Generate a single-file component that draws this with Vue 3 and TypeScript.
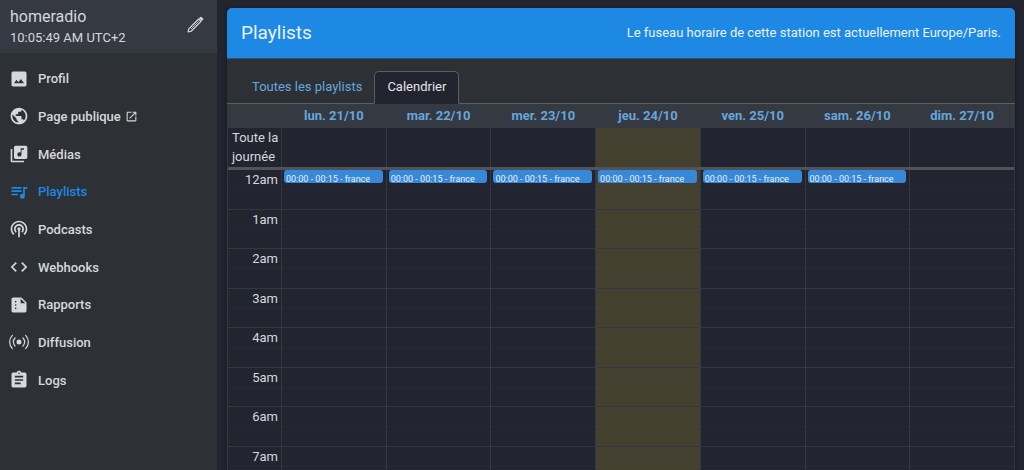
<script setup lang="ts">
interface NavItem {
  label: string
  path: string
  box: string
  active?: boolean
  external?: boolean
}

interface CalendarEvent {
  label: string
}

interface Day {
  label: string
  today: boolean
  event: CalendarEvent | null
}

const nav: NavItem[] = [
  {
    label: 'Profil',
    box: '0 0 24 24',
    path: 'M5 21q-.825 0-1.412-.587T3 19V5q0-.825.588-1.412T5 3h14q.825 0 1.413.588T21 5v14q0 .825-.587 1.413T19 21H5zm1-4h12l-3.75-5-3 4L9 13l-3 4z',
  },
  {
    label: 'Page publique',
    box: '0 0 24 24',
    external: true,
    path: 'M12 2C6.48 2 2 6.48 2 12s4.48 10 10 10 10-4.48 10-10S17.52 2 12 2zm-1 17.93c-3.95-.49-7-3.85-7-7.93 0-.62.08-1.21.21-1.79L9 15v1c0 1.1.9 2 2 2v1.93zm6.9-2.54c-.26-.81-1-1.39-1.9-1.39h-1v-3c0-.55-.45-1-1-1H8v-2h2c.55 0 1-.45 1-1V7h2c1.1 0 2-.9 2-2v-.41c2.93 1.19 5 4.06 5 7.41 0 2.08-.8 3.97-2.1 5.39z',
  },
  {
    label: 'Médias',
    box: '0 0 24 24',
    path: 'M20 2H8c-1.1 0-2 .9-2 2v12c0 1.1.9 2 2 2h12c1.1 0 2-.9 2-2V4c0-1.1-.9-2-2-2zm-2 5h-3v5.5c0 1.38-1.12 2.5-2.5 2.5S10 13.88 10 12.5s1.12-2.5 2.5-2.5c.57 0 1.08.19 1.5.51V5h4v2zM4 6H2v14c0 1.1.9 2 2 2h14v-2H4V6z',
  },
  {
    label: 'Playlists',
    box: '0 0 24 24',
    active: true,
    path: 'M15 6H3v2h12V6zm0 4H3v2h12v-2zM3 16h8v-2H3v2zM17 6v8.18c-.31-.11-.65-.18-1-.18-1.66 0-3 1.34-3 3s1.34 3 3 3 3-1.34 3-3V8h3V6h-5z',
  },
  {
    label: 'Podcasts',
    box: '0 0 24 24',
    path: 'M14 12c0 .74-.4 1.38-1 1.72V22h-2v-8.28c-.6-.35-1-.98-1-1.72 0-1.1.9-2 2-2s2 .9 2 2zm-2-6c-3.31 0-6 2.69-6 6 0 1.74.75 3.31 1.94 4.4l1.42-1.42C8.53 14.25 8 13.19 8 12c0-2.21 1.79-4 4-4s4 1.79 4 4c0 1.19-.53 2.25-1.36 2.98l1.42 1.42C17.25 15.31 18 13.74 18 12c0-3.31-2.69-6-6-6zm0-4C6.48 2 2 6.48 2 12c0 2.85 1.2 5.41 3.11 7.24l1.42-1.42C4.98 16.36 4 14.29 4 12c0-4.41 3.59-8 8-8s8 3.59 8 8c0 2.29-.98 4.36-2.53 5.82l1.42 1.42C20.8 17.41 22 14.85 22 12c0-5.52-4.48-10-10-10z',
  },
  {
    label: 'Webhooks',
    box: '0 0 24 24',
    path: 'M9.4 16.6L4.8 12l4.6-4.6L8 6l-6 6 6 6 1.4-1.4zm5.2 0l4.6-4.6-4.6-4.6L16 6l6 6-6 6-1.4-1.4z',
  },
  {
    label: 'Rapports',
    box: '0 0 24 24',
    path: 'M15 3H5c-1.1 0-1.99.9-1.99 2L3 19c0 1.1.89 2 1.99 2H19c1.1 0 2-.9 2-2V9l-6-6zM8 17c-.55 0-1-.45-1-1s.45-1 1-1 1 .45 1 1-.45 1-1 1zm0-4c-.55 0-1-.45-1-1s.45-1 1-1 1 .45 1 1-.45 1-1 1zm0-4c-.55 0-1-.45-1-1s.45-1 1-1 1 .45 1 1-.45 1-1 1zm6 1V4.5l5.5 5.5H14z',
  },
  {
    label: 'Diffusion',
    box: '0 0 16 16',
    path: 'M3.05 3.05a7 7 0 0 0 0 9.9.5.5 0 0 1-.707.707 8 8 0 0 1 0-11.314.5.5 0 0 1 .707.707m2.122 2.122a4 4 0 0 0 0 5.656.5.5 0 1 1-.708.708 5 5 0 0 1 0-7.072.5.5 0 0 1 .708.708m5.656-.708a.5.5 0 0 1 .708 0 5 5 0 0 1 0 7.072.5.5 0 1 1-.708-.708 4 4 0 0 0 0-5.656.5.5 0 0 1 0-.708m2.122-2.12a.5.5 0 0 1 .707 0 8 8 0 0 1 0 11.313.5.5 0 0 1-.707-.707 7 7 0 0 0 0-9.9.5.5 0 0 1 0-.707zM10 8a2 2 0 1 1-4 0 2 2 0 0 1 4 0',
  },
  {
    label: 'Logs',
    box: '0 0 24 24',
    path: 'M19 3h-4.18C14.4 1.84 13.3 1 12 1c-1.3 0-2.4.84-2.82 2H5c-1.1 0-2 .9-2 2v14c0 1.1.9 2 2 2h14c1.1 0 2-.9 2-2V5c0-1.1-.9-2-2-2zm-7 0c.55 0 1 .45 1 1s-.45 1-1 1-1-.45-1-1 .45-1 1-1zm2 14H7v-2h7v2zm3-4H7v-2h10v2zm0-4H7V7h10v2z',
  },
]

const france: CalendarEvent = { label: '00:00 - 00:15 - france' }

const days: Day[] = [
  { label: 'lun. 21/10', today: false, event: france },
  { label: 'mar. 22/10', today: false, event: france },
  { label: 'mer. 23/10', today: false, event: france },
  { label: 'jeu. 24/10', today: true, event: france },
  { label: 'ven. 25/10', today: false, event: france },
  { label: 'sam. 26/10', today: false, event: france },
  { label: 'dim. 27/10', today: false, event: null },
]

const hours: string[] = ['12am', '1am', '2am', '3am', '4am', '5am', '6am', '7am']
</script>

<template>
  <div class="app">
    <aside class="sidebar">
      <header class="station">
        <div>
          <div class="station-name">homeradio</div>
          <div class="station-time">10:05:49 AM UTC+2</div>
        </div>
        <button class="edit" type="button" aria-label="Modifier">
          <svg class="icon" viewBox="0 0 24 24" aria-hidden="true">
            <g fill="none" stroke="currentColor" stroke-width="1.5" stroke-linejoin="round">
              <path d="M3.8 20.2l.7-3.6L16.4 4.8l2.8 2.8L7.4 19.5z" />
              <path d="M7 17L16.6 7.4" stroke-width="1" />
            </g>
            <path d="M16.8 3.7l1.1-1.1a1.5 1.5 0 0 1 2.1 0l1.4 1.4a1.5 1.5 0 0 1 0 2.1l-1.1 1.1z" />
          </svg>
        </button>
      </header>
      <nav class="menu">
        <a
          v-for="item in nav"
          :key="item.label"
          href="#"
          class="menu-item"
          :class="{ active: item.active }"
        >
          <svg class="icon" :viewBox="item.box" aria-hidden="true"><path :d="item.path" /></svg>
          <span>{{ item.label }}</span>
          <svg v-if="item.external" class="icon-small" viewBox="0 0 24 24" aria-hidden="true">
            <path
              d="M19 19H5V5h7V3H5c-1.11 0-2 .9-2 2v14c0 1.1.89 2 2 2h14c1.1 0 2-.9 2-2v-7h-2v7zM14 3v2h3.59l-9.83 9.83 1.41 1.41L19 6.41V10h2V3h-7z"
            />
          </svg>
        </a>
      </nav>
    </aside>

    <main class="content">
      <section class="card">
        <header class="card-header">
          <h1>Playlists</h1>
          <p>Le fuseau horaire de cette station est actuellement Europe/Paris.</p>
        </header>
        <div class="tabs" role="tablist">
          <button type="button" class="tab" role="tab" aria-selected="false">
            Toutes les playlists
          </button>
          <button type="button" class="tab selected" role="tab" aria-selected="true">
            Calendrier
          </button>
        </div>
        <table class="calendar">
          <thead>
            <tr>
              <td class="axis"></td>
              <th v-for="day in days" :key="day.label" scope="col">
                <a href="#">{{ day.label }}</a>
              </th>
            </tr>
          </thead>
          <tbody>
            <tr class="all-day">
              <th class="axis" scope="row">Toute la journée</th>
              <td v-for="day in days" :key="day.label" :class="{ today: day.today }"></td>
            </tr>
            <tr class="divider">
              <td colspan="8"></td>
            </tr>
          </tbody>
          <tbody class="hours">
            <tr v-for="(hour, index) in hours" :key="hour">
              <th class="axis" scope="row"><div class="half">{{ hour }}</div></th>
              <td v-for="day in days" :key="day.label" :class="{ today: day.today }">
                <div class="half">
                  <a v-if="index === 0 && day.event" href="#" class="event">{{ day.event.label }}</a>
                </div>
              </td>
            </tr>
          </tbody>
        </table>
      </section>
    </main>
  </div>
</template>

<style>
html,
body {
  background: #22242f;
}

body {
  overflow: hidden;
}
</style>

<style scoped>
.app {
  display: flex;
  height: 100vh;
  overflow: hidden;
  color: #d6d8db;
  font: 13px/19px Roboto, sans-serif;
}

a {
  color: inherit;
  text-decoration: none;
}

button {
  border: 0;
  background: none;
  color: inherit;
  font: inherit;
}

.sidebar {
  flex: 0 0 217px;
  background: #2d3135;
}

.station {
  display: flex;
  align-items: center;
  justify-content: space-between;
  box-sizing: border-box;
  height: 53px;
  padding: 0 12px 0 10px;
  background: #353941;
}

.station-name {
  font-size: 16px;
  line-height: 22px;
}

.edit {
  display: flex;
  padding: 0 0 4px;
}

.icon {
  flex: none;
  width: 20px;
  height: 20px;
  fill: currentColor;
}

.icon-small {
  width: 13px;
  height: 13px;
  fill: currentColor;
}

.menu {
  display: grid;
  grid-auto-rows: 1fr;
  height: 339px;
  padding-top: 7px;
}

.menu-item {
  display: flex;
  align-items: center;
  gap: 9px;
  padding-left: 9px;
  font-weight: 500;
}

.menu-item .icon-small {
  margin-left: -5px;
}

.active {
  color: #1e88e5;
}

.content {
  flex: 1;
  min-width: 0;
  padding: 8px 9px 0 10px;
}

.card {
  overflow: hidden;
  border-radius: 5px 5px 0 0;
  background: #2d3135;
  box-shadow: 0 1px 4px #15171e;
}

.card-header {
  display: flex;
  align-items: center;
  justify-content: space-between;
  height: 50px;
  padding: 0 14px;
  background: #1e88e5;
  color: #eaf3fc;
}

h1 {
  margin: 0;
  font-size: 19px;
  font-weight: 400;
  line-height: 24px;
}

p {
  margin: 0;
  padding-bottom: 2px;
}

.tabs {
  display: flex;
  padding: 12px 13px 0;
  border-top: 1px solid #29536f;
  border-bottom: 1px solid #5b5f64;
}

.tab {
  height: 33px;
  margin-bottom: -1px;
  padding: 0 11px 2px;
  border: 1px solid transparent;
  border-radius: 5px 5px 0 0;
  color: #66a6dd;
}

.selected {
  padding: 0 12px 2px;
  border-color: #5b5f64;
  border-bottom-color: #22242f;
  background: #22242f;
  color: #e4e5e7;
}

.calendar {
  width: 100%;
  table-layout: fixed;
  border-spacing: 0;
  border-right: 1px solid #343840;
  background: #22242f;
}

.calendar td,
.calendar th {
  padding: 0;
  border-left: 1px solid #343840;
  vertical-align: top;
  font-weight: 400;
}

.calendar .axis {
  box-sizing: border-box;
  width: 54px;
}

.calendar thead th,
.calendar thead td {
  box-sizing: border-box;
  height: 24px;
  padding-bottom: 2px;
  border-color: #353941;
  background: #353941;
  color: #66a6dd;
  font-weight: 700;
  vertical-align: middle;
}

.calendar .all-day .axis {
  height: 39px;
  padding-left: 4px;
  text-align: left;
}

.calendar .today {
  background: #434030;
}

.calendar .today .half {
  border-bottom-color: #464437;
}

.calendar .divider td {
  height: 3px;
  background: #50535a;
}

.hours td {
  height: 39px;
  border-bottom: 1px solid #343840;
}

.hours th {
  border-bottom: 1px solid #343840;
}

.hours tr:nth-child(even) td {
  height: 38px;
}

.hours .axis {
  text-align: right;
}

.hours .axis .half {
  padding-right: 3px;
}

.half {
  height: 19px;
  border-bottom: 1px dotted #2b2e38;
}

.event {
  display: block;
  box-sizing: border-box;
  height: 13px;
  margin: 0 3px 0 2px;
  padding: 2px 2px 0;
  overflow: hidden;
  border-radius: 3px;
  background: #3788d8;
  color: #e6effa;
  font-size: 9px;
  line-height: 14px;
  white-space: nowrap;
}
</style>
